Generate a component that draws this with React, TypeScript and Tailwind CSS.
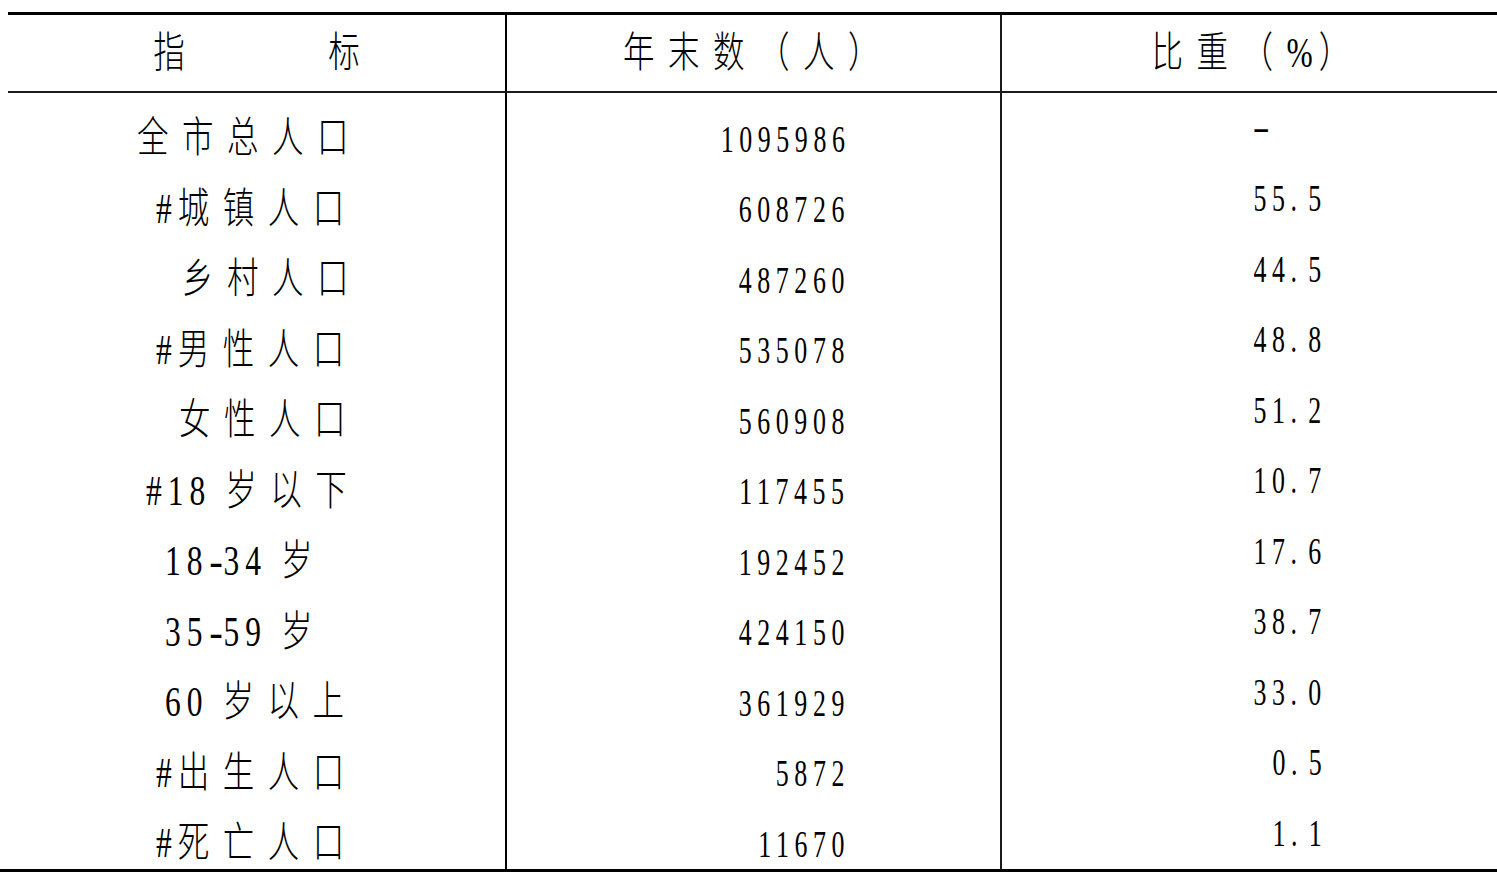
import React from "react";

const rows = [
  { label: "全市总人口", pad: "pl-[129px]", num: "1095986", pct: "-" },
  { label: "#城镇人口", pad: "pl-[148px]", num: "608726", pct: "55.5" },
  { label: "乡村人口", pad: "pl-[174px]", num: "487260", pct: "44.5" },
  { label: "#男性人口", pad: "pl-[148px]", num: "535078", pct: "48.8" },
  { label: "女性人口", pad: "pl-[171px]", num: "560908", pct: "51.2" },
  { label: "#18 岁以下", pad: "pl-[138px]", num: "117455", pct: "10.7" },
  { label: "18-34 岁", pad: "pl-[157px]", num: "192452", pct: "17.6" },
  { label: "35-59 岁", pad: "pl-[157px]", num: "424150", pct: "38.7" },
  { label: "60 岁以上", pad: "pl-[157px]", num: "361929", pct: "33.0" },
  { label: "#出生人口", pad: "pl-[148px]", num: "5872", pct: "0.5" },
  { label: "#死亡人口", pad: "pl-[148px]", num: "11670", pct: "1.1" },
];

const font = "font-['Liberation_Serif','Noto_Sans_CJK_SC',serif]";

// split text into CJK / latin runs so they get different tracking
function Runs({ text }: { text: string }) {
  const parts = text.split(/([\u4e00-\u9fff（）]+|-)/).filter(Boolean);
  return (
    <>
      {parts.map((p, i) => {
        if (p === "-")
          return (
            <span key={i} className="inline-block scale-x-[1.3] mx-[3px]">
              -
            </span>
          );
        return /[\u4e00-\u9fff（）]/.test(p) ? (
          <span key={i} className="tracking-[18px] font-light">
            {p}
          </span>
        ) : (
          <span key={i} className="tracking-[8px]">
            {p}
          </span>
        );
      })}
    </>
  );
}

function Cjk({ text, origin = "origin-left" }: { text: string; origin?: string }) {
  return (
    <span className={`inline-block whitespace-pre text-[42px] leading-none scale-x-75 ${origin}`}>
      <Runs text={text} />
    </span>
  );
}

function Num({ text }: { text: string }) {
  const [a, b] = text.split(".");
  return (
    <span className="inline-block whitespace-pre text-[37px] leading-none tracking-[8px] scale-x-[0.7] origin-right">
      {a}
      {b !== undefined && (
        <>
          <span className="tracking-[16px]">.</span>
          {b}
        </>
      )}
    </span>
  );
}

export default function App() {
  return (
    <div className={`w-[1497px] h-[874px] bg-white text-black pt-[12px] ${font}`}>
      {/* header */}
      <div className="ml-[8px] border-t-[3px] border-black">
        <div className="grid grid-cols-[499px_495px_1fr] h-[78px] border-b-2 border-[#1a1a1a]">
          <div className="flex items-center justify-center gap-[133px] border-r-2 border-black">
            <span className="inline-block text-[42px] leading-none font-light scale-x-75 origin-center">指</span>
            <span className="inline-block text-[42px] leading-none font-light scale-x-75 origin-center">标</span>
          </div>
          <div className="flex items-center justify-center pl-[10px] border-r-2 border-[#1a1a1a]">
            <Cjk text="年末数（人）" origin="origin-center" />
          </div>
          <div className="flex items-center justify-center pl-[16px]">
            <Cjk text="比重（%）" origin="origin-center" />
          </div>
        </div>

        {/* body */}
        <div className="grid grid-cols-[499px_495px_1fr] grid-rows-[repeat(11,70.5px)]">
          {rows.map((r) => (
            <React.Fragment key={r.label}>
              <div className={`flex items-center pt-[20px] border-r-2 border-black ${r.pad}`}>
                <Cjk text={r.label} />
              </div>
              <div className="flex items-center justify-end pt-[22px] pr-[150px] border-r-2 border-[#1a1a1a]">
                <Num text={r.num} />
              </div>
              {r.pct === "-" ? (
                <div className="flex items-center justify-end pr-[230px] pb-[2px]">
                  <span className="inline-block text-[37px] leading-none scale-x-[1.4]">-</span>
                </div>
              ) : (
                <div className="flex items-center justify-end pr-[170px]">
                  <Num text={r.pct} />
                </div>
              )}
            </React.Fragment>
          ))}
        </div>
      </div>
      <div className="h-[3px] bg-black" />
    </div>
  );
}
